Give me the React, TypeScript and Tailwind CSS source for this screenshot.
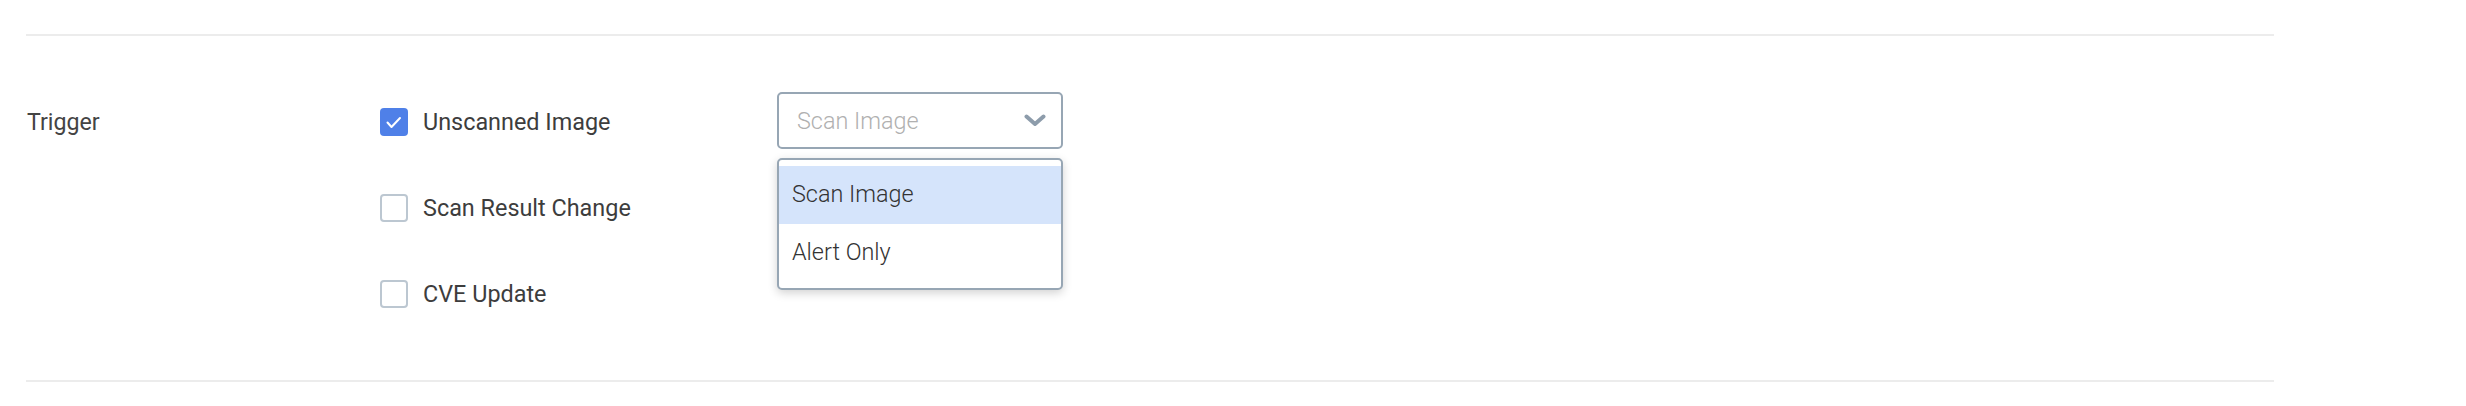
import { useState } from "react"

const triggers = [
    { id: "unscanned", label: "Unscanned Image" },
    { id: "result", label: "Scan Result Change" },
    { id: "cve", label: "CVE Update" },
]

const options = ["Scan Image", "Alert Only"]

function Checkbox({ checked, label, onToggle }: { checked: boolean; label: string; onToggle: () => void }) {
    return (
        <label className="flex h-[28px] cursor-pointer items-center gap-[15px]" onClick={onToggle}>
            {checked ? (
                <span className="flex h-[28px] w-[28px] items-center justify-center rounded-[4px] bg-[#4f80e8]">
                    <svg width="28" height="28" viewBox="0 0 28 28" fill="none">
                        <path d="M7.5 14.5 L11.5 19 L20 10" stroke="white" strokeWidth="2" strokeLinecap="round" strokeLinejoin="round" />
                    </svg>
                </span>
            ) : (
                <span className="h-[28px] w-[28px] rounded-[4px] border-2 border-[#bcc7d1] bg-white" />
            )}
            <span className="mt-[2px] text-[23.4px] leading-none text-[#3d3d3d]">{label}</span>
        </label>
    )
}

export default function App() {
    const [checked, setChecked] = useState<Record<string, boolean>>({ unscanned: true })
    const [hovered, setHovered] = useState(0)

    return (
        <div className="min-h-screen w-full bg-white pt-[34px] font-['Roboto',sans-serif]">
            <div className="ml-[26px] w-[2248px]">
                <div className="h-[2px] bg-[#ececec]" />

                {/* TRIGGER SECTION */}
                <div className="flex py-[72px]">
                    <div className="flex h-[28px] w-[354px] items-center pl-px pt-[2px] text-[23.2px] leading-none text-[#444]">
                        Trigger
                    </div>

                    <div className="flex w-[397px] flex-col gap-[58px]">
                        {triggers.map((t) => (
                            <Checkbox
                                key={t.id}
                                label={t.label}
                                checked={!!checked[t.id]}
                                onToggle={() => setChecked((c) => ({ ...c, [t.id]: !c[t.id] }))}
                            />
                        ))}
                    </div>

                    <div className="relative -mt-[16px] h-[57px] w-[286px]">
                        <div className="flex h-[57px] items-center justify-between rounded-[5px] border-2 border-[#97a6b4] bg-white pl-[18px] pr-[15px]">
                            <span className="mt-[2px] text-[23.4px] font-light leading-none text-[#b0b0b0]">Scan Image</span>
                            <svg width="22" height="13" viewBox="0 0 22 13" fill="none">
                                <path d="M2.5 2.5 L11 10 L19.5 2.5" stroke="#8d9cab" strokeWidth="4" strokeLinecap="round" strokeLinejoin="round" />
                            </svg>
                        </div>

                        <div className="absolute left-0 top-[66px] w-[286px] rounded-[5px] border-2 border-[#97a6b4] bg-white py-[6px] shadow-[0_3px_10px_rgba(0,0,0,0.18)]">
                            {options.map((o, i) => (
                                <div
                                    key={o}
                                    onMouseEnter={() => setHovered(i)}
                                    className={
                                        i === hovered
                                            ? "flex h-[58px] items-center bg-[#d5e4fb] pl-[13px] text-[23.4px] font-light leading-none text-[#333]"
                                            : "flex h-[58px] items-center pl-[13px] text-[23.4px] font-light leading-none text-[#333]"
                                    }
                                >
                                    {o}
                                </div>
                            ))}
                        </div>
                    </div>
                </div>

                <div className="h-[2px] bg-[#ececec]" />
            </div>
        </div>
    )
}
